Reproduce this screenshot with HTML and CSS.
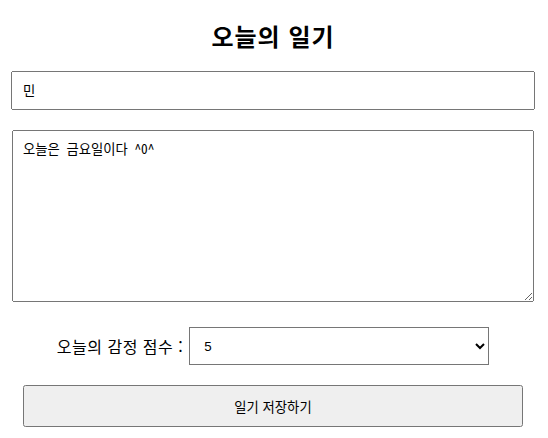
FILE: index.html
```html
<!DOCTYPE html>
<html lang="ko">
<head>
<meta charset="utf-8">
<title>오늘의 일기</title>
<link rel="stylesheet" href="styles.css">
</head>
<body>
<div class="editor">
  <h2 class="title">오늘의 일기</h2>
  <input class="author" type="text" name="author" value="민">
  <textarea class="content" name="content">오늘은 금요일이다 ^0^</textarea>
  <div class="emotion-row">
    <label class="emotion-label" for="emotion">오늘의 감정 점수 :</label>
    <select class="emotion" id="emotion" name="emotion">
      <option value="1">1</option>
      <option value="2">2</option>
      <option value="3">3</option>
      <option value="4">4</option>
      <option value="5" selected>5</option>
    </select>
  </div>
  <button class="save" type="button">일기 저장하기</button>
</div>
</body>
</html>
```

FILE: styles.css
```css
html, body {
  margin: 0;
  padding: 0;
  background: #ffffff;
}

body {
  font-family: "Noto Sans CJK KR", "Noto Sans", sans-serif;
  color: #000000;
}

.editor {
  display: flex;
  flex-direction: column;
  align-items: center;
  padding: 20px 9px 0 7px;
}

.title {
  margin: 0 0 20px 0;
  font-size: 24px;
  line-height: 31px;
  height: 31px;
  font-weight: 700;
  letter-spacing: 1px;
}

.author {
  width: 500px;
  height: 15px;
  padding: 10px;
  margin: 0 0 20px 0;
  font-family: "Liberation Sans", "Noto Sans CJK KR", sans-serif;
  font-size: 13.333px;
}

.content {
  width: 500px;
  height: 150px;
  padding: 10px;
  margin: 0 0 25px 0;
  font-family: "Noto Sans Mono CJK KR", "Noto Sans CJK KR", monospace;
  font-size: 13.333px;
  line-height: 16px;
}

.emotion-row {
  display: flex;
  align-items: center;
  justify-content: center;
  gap: 6px;
  height: 38px;
  margin: 0 0 20px 0;
}

.emotion-label {
  font-size: 16px;
  line-height: 20px;
  letter-spacing: 0.5px;
}

.emotion {
  width: 300px;
  height: 38px;
  padding: 10px;
  font-family: "Liberation Sans", "Noto Sans CJK KR", sans-serif;
  font-size: 13.333px;
  background: #ffffff;
}

.save {
  width: 500px;
  height: 42px;
  padding: 10px;
  font-family: "Noto Sans CJK KR", sans-serif;
  font-size: 13.333px;
  cursor: pointer;
}
```
